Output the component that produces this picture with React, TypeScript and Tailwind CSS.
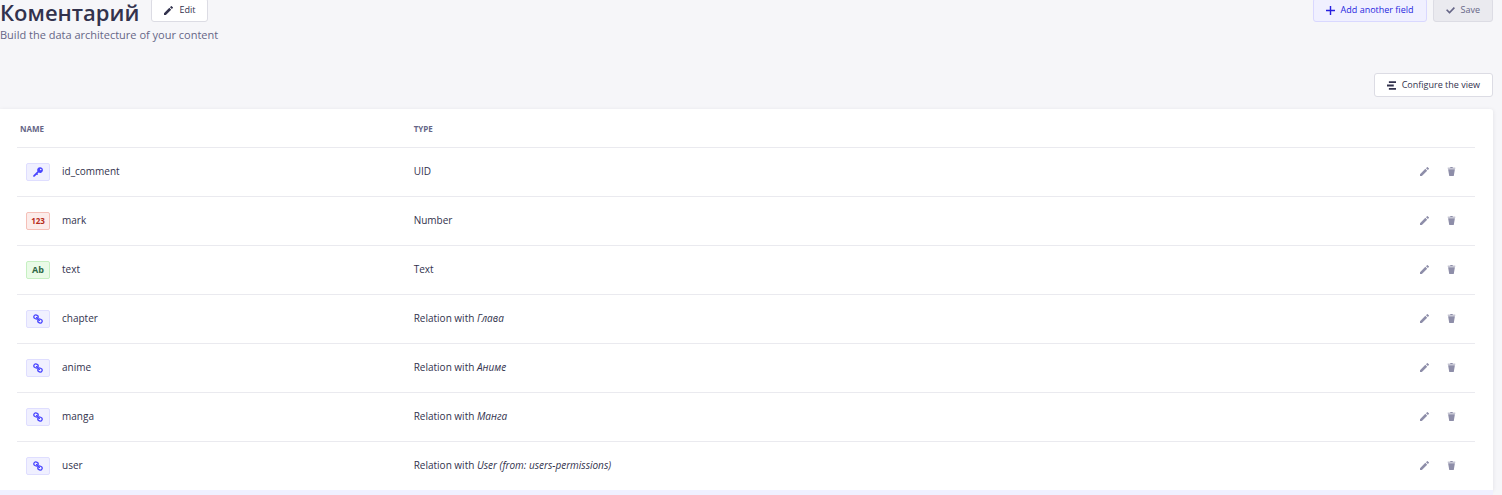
import type { ReactNode } from "react";

type IconProps = { className?: string };

function PencilIcon({ className }: IconProps) {
  return (
    <svg viewBox="0 0 24 24" fill="currentColor" className={className} aria-hidden="true">
      <path d="M23.604 3.514c.528.528.528 1.36 0 1.887l-2.622 2.607-4.99-4.99L18.6.396a1.322 1.322 0 0 1 1.887 0l3.118 3.118ZM0 24v-4.99l14.2-14.2 4.99 4.99L4.99 24H0Z" />
    </svg>
  );
}

function TrashIcon({ className }: IconProps) {
  return (
    <svg viewBox="0 0 24 24" fill="currentColor" className={className} aria-hidden="true">
      <path d="M3.236 6.149a.2.2 0 0 0-.197.233L6 24h12l2.96-17.618a.2.2 0 0 0-.196-.233H3.236ZM21.8 1.983c.11 0 .2.09.2.2v1.584a.2.2 0 0 1-.2.2H2.2a.2.2 0 0 1-.2-.2V2.183c0-.11.09-.2.2-.2h5.511c.9 0 1.631-1.09 1.631-1.983h5.316c0 .894.73 1.983 1.631 1.983H21.8Z" />
    </svg>
  );
}

function PlusIcon({ className }: IconProps) {
  return (
    <svg viewBox="0 0 24 24" fill="currentColor" className={className} aria-hidden="true">
      <path d="M24 13.604a.3.3 0 0 1-.3.3h-9.795V23.7a.3.3 0 0 1-.3.3h-3.21a.3.3 0 0 1-.3-.3v-9.795H.3a.3.3 0 0 1-.3-.3v-3.21a.3.3 0 0 1 .3-.3h9.795V.3a.3.3 0 0 1 .3-.3h3.21a.3.3 0 0 1 .3.3v9.795H23.7a.3.3 0 0 1 .3.3v3.21Z" />
    </svg>
  );
}

function CheckIcon({ className }: IconProps) {
  return (
    <svg viewBox="0 0 24 24" fill="currentColor" className={className} aria-hidden="true">
      <path d="M20.727 2.97a.2.2 0 0 1 .286 0l2.85 2.89a.2.2 0 0 1 0 .28L9.554 20.854a.2.2 0 0 1-.285 0l-9.13-9.243a.2.2 0 0 1 0-.281l2.85-2.892a.2.2 0 0 1 .284 0l6.14 6.209L20.726 2.97Z" />
    </svg>
  );
}

function LayersIcon({ className }: IconProps) {
  return (
    <svg viewBox="0 0 24 24" fill="currentColor" className={className} aria-hidden="true">
      <path d="M5 0.500h19v5H5zM0 9.500h18v5H0zM5 18.500h19v5H5z" />
    </svg>
  );
}

function KeyIcon({ className }: IconProps) {
  return (
    <svg viewBox="0 0 24 24" className={className} aria-hidden="true">
      <path
        fill="currentColor"
        fillRule="evenodd"
        d="M17 0.500a6.800 6.800 0 1 1-3.400 12.700L11 15.800l1 2-2 1.500-1.600-1L3.500 23.500H0.500v-3L10.800 10.400A6.800 6.800 0 0 1 17 0.500Zm1.500 3.500a2 2 0 1 0 0 4 2 2 0 0 0 0-4Z"
      />
    </svg>
  );
}

function ChainIcon({ className }: IconProps) {
  return (
    <svg
      viewBox="0 0 24 24"
      fill="none"
      stroke="currentColor"
      strokeWidth="3"
      strokeLinecap="round"
      className={className}
      aria-hidden="true"
    >
      <rect x="2" y="2.500" width="10.500" height="9" rx="4.500" transform="rotate(25 7 7)" />
      <rect x="11.500" y="12.500" width="10.500" height="9" rx="4.500" transform="rotate(25 17 17)" />
      <path d="m8.500 8.500 7 7" />
    </svg>
  );
}

type Kind = "uid" | "number" | "text" | "relation";

const badgeStyles: Record<Kind, string> = {
  uid: "border-[#dfdeff] bg-[#f0f0ff] text-[#4945ff]",
  number: "border-[#f5c0b8] bg-[#fcecea] text-[#b72b1a]",
  text: "border-[#c6f0c2] bg-[#eafbe7] text-[#2f6846]",
  relation: "border-[#dfdeff] bg-[#f0f0ff] text-[#4945ff]",
};

const badgeContent: Record<Kind, ReactNode> = {
  uid: <KeyIcon className="size-[10px]" />,
  number: <span className="text-[8px]">123</span>,
  text: <span className="text-[9px]">Ab</span>,
  relation: <ChainIcon className="size-[10px]" />,
};

function TypeBadge({ kind }: { kind: Kind }) {
  return (
    <span
      className={`flex h-[18px] w-6 shrink-0 items-center justify-center rounded-xs border font-bold leading-none ${badgeStyles[kind]}`}
    >
      {badgeContent[kind]}
    </span>
  );
}

type Field = { name: string; kind: Kind; label: string; target?: string };

const fields: Field[] = [
  { name: "id_comment", kind: "uid", label: "UID" },
  { name: "mark", kind: "number", label: "Number" },
  { name: "text", kind: "text", label: "Text" },
  { name: "chapter", kind: "relation", label: "Relation with", target: "Глава" },
  { name: "anime", kind: "relation", label: "Relation with", target: "Аниме" },
  { name: "manga", kind: "relation", label: "Relation with", target: "Манга" },
  { name: "user", kind: "relation", label: "Relation with", target: "User (from: users-permissions)" },
];

const buttonBase =
  "flex h-6 items-center gap-[6px] whitespace-nowrap rounded-[3px] border px-3 text-[9px] leading-3 font-medium";

export default function App() {
  return (
    <div className="min-h-screen overflow-hidden bg-[#f6f6f9] pr-[9px] font-['Open_Sans','Noto_Sans',sans-serif] text-[#32324d]">
      <header className="flex items-start justify-between">
        <div>
          <div className="flex items-start gap-3">
            <h1 className="text-[22px] leading-6 font-semibold">Коментарий</h1>
            <button type="button" className={`${buttonBase} -mt-[2px] border-[#dcdce4] bg-white`}>
              <PencilIcon className="size-[9px]" />
              Edit
            </button>
          </div>
          <p className="mt-[3px] text-[11px] leading-4 text-[#666687]">
            Build the data architecture of your content
          </p>
        </div>
        <div className="-mt-[2px] flex gap-[6px]">
          <button type="button" className={`${buttonBase} border-[#d9d8ff] bg-[#f0f0ff] text-[#271fe0]`}>
            <PlusIcon className="size-[9px]" />
            Add another field
          </button>
          <button type="button" disabled className={`${buttonBase} border-[#dcdce4] bg-[#eaeaef] text-[#666687]`}>
            <CheckIcon className="size-[9px]" />
            Save
          </button>
        </div>
      </header>

      <main>
        <div className="mt-[30px] flex justify-end">
          <button type="button" className={`${buttonBase} border-[#dcdce4] bg-white`}>
            <LayersIcon className="size-[9px]" />
            Configure the view
          </button>
        </div>

        <section className="mt-3 rounded-tr-[3px] bg-white pr-[18px] pl-[17px] shadow-[0_1px_4px_rgba(33,33,52,0.1)]">
          <table className="w-full table-fixed border-collapse text-left">
            <thead>
              <tr className="h-[38px] text-[8px] leading-3 text-[#666687]">
                <th scope="col" className="w-[27%] pt-[2px] pl-[3px] font-bold">NAME</th>
                <th scope="col" className="pt-[2px] pl-[3px] font-bold">TYPE</th>
                <th scope="col" aria-label="Actions" className="w-20" />
              </tr>
            </thead>
            <tbody>
              {fields.map((field) => (
                <tr key={field.name} className="h-[49px] border-t border-[#eaeaef] text-[10px] leading-4">
                  <td className="pl-[9px]">
                    <div className="flex items-center gap-3">
                      <TypeBadge kind={field.kind} />
                      <span className="pb-[2px] font-medium">{field.name}</span>
                    </div>
                  </td>
                  <td className="pb-[2px] pl-[3px]">
                    {field.label}
                    {field.target && <span className="italic"> {field.target}</span>}
                  </td>
                  <td>
                    <div className="flex justify-end gap-[18px] pr-[19px] text-[#8e8ea9]">
                      <button type="button" aria-label={`Edit ${field.name}`}>
                        <PencilIcon className="size-[9px]" />
                      </button>
                      <button type="button" aria-label={`Delete ${field.name}`}>
                        <TrashIcon className="size-[9px]" />
                      </button>
                    </div>
                  </td>
                </tr>
              ))}
            </tbody>
          </table>
        </section>
        <div className="h-6 bg-[#f0f0ff]" />
      </main>
    </div>
  );
}
